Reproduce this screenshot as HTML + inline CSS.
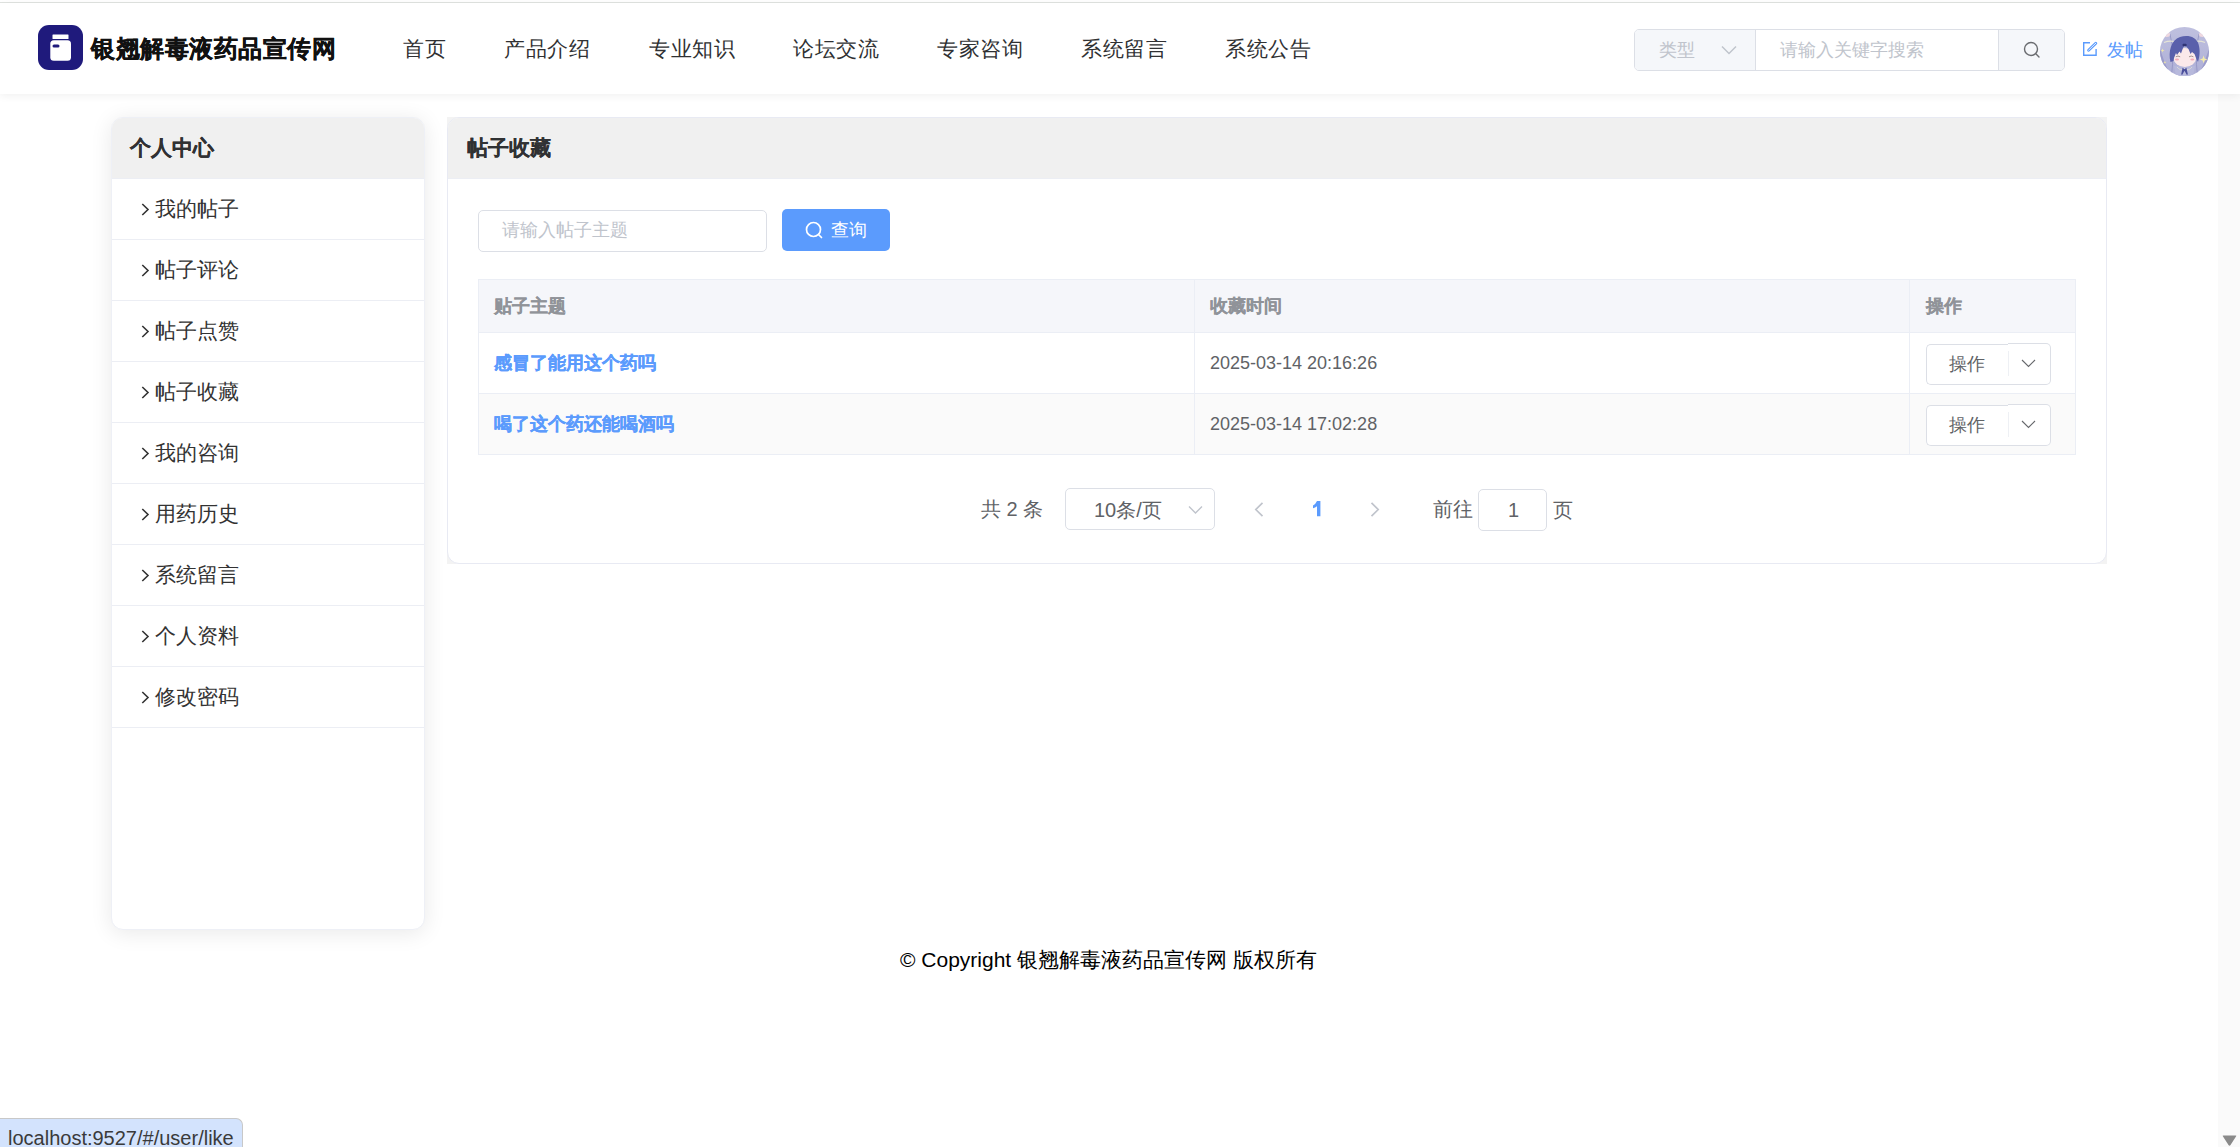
<!DOCTYPE html>
<html><head><meta charset="utf-8">
<style>
*{box-sizing:border-box;margin:0;padding:0}
html,body{width:2240px;height:1147px;overflow:hidden;background:#fff;font-family:"Liberation Sans",sans-serif;color:#333}
.abs{position:absolute}
#topline{left:0;top:2px;width:2240px;height:1px;background:#e0e3e0}
#header{left:0;top:3px;width:2240px;height:91px;background:#fff;box-shadow:0 2px 8px rgba(0,0,0,0.06)}
#logo{left:38px;top:25px;width:45px;height:45px;border-radius:11px;background:#1f1a7c}
#title{left:91px;top:34px;font-size:24px;letter-spacing:0.55px;-webkit-text-stroke:0.3px #111;font-weight:bold;color:#111;white-space:nowrap;line-height:30px}
.nav{top:36px;font-size:21px;letter-spacing:0.6px;color:#303133;line-height:26px;white-space:nowrap}
#sbox{left:1634px;top:29px;width:431px;height:42px;border:1px solid #dcdfe6;border-radius:5px;background:#fff;overflow:hidden}
#ssel{left:0;top:0;width:121px;height:40px;background:#f5f7fa;border-right:1px solid #dcdfe6}
#sbtn{right:0;top:0;width:66px;height:40px;background:#f5f7fa;border-left:1px solid #dcdfe6}
.ph{color:#c0c4cc;font-size:18px;line-height:22px;white-space:nowrap}
#side{left:111px;top:117px;width:314px;height:813px;border-radius:12px;background:#fff;box-shadow:0 3px 22px rgba(0,0,0,0.09);overflow:hidden;border:1px solid #eef0f6}
#sidehead{left:0;top:0;width:100%;height:61px;background:#f0f0f0;border-bottom:1px solid #eceef4}
.sitem{left:0;width:100%;height:61px;border-bottom:1px solid #eceef4}
.sitem span{position:absolute;left:43px;top:18px;font-size:21px;line-height:24px;color:#333;white-space:nowrap}
.sitem i{position:absolute;left:29px;top:23px}
#main{left:447px;top:117px;width:1660px;height:447px;border:1px solid #e8eaf3;border-radius:12px;background:#fff;overflow:hidden}
#mainhead{left:0;top:0;width:100%;height:61px;background:#f0f0f0;border-bottom:1px solid #eceef4}
.bold20{font-size:21px;font-weight:bold;color:#303133;-webkit-text-stroke:0.15px #303133;line-height:24px;white-space:nowrap}
#footer{left:900px;top:947px;font-size:21px;color:#000;line-height:26px;white-space:nowrap}
#status{left:0;top:1118px;width:243px;height:29px;background:#d3e3fd;border-top:1px solid #c8c8c8;border-right:1px solid #c8c8c8;border-top-right-radius:7px}
.th{font-size:18px;font-weight:bold;color:#909399;-webkit-text-stroke:0.2px #909399;line-height:22px;white-space:nowrap}
.tlink{font-size:18px;font-weight:bold;color:#5b9bfd;-webkit-text-stroke:0.25px #5b9bfd;line-height:22px;white-space:nowrap}
.tdate{font-size:18px;color:#606266;line-height:22px;white-space:nowrap}
.opl{width:83px;height:41px;border:1px solid #dcdfe6;border-right:none;border-radius:5px 0 0 5px;background:#fff}
.opr{width:43px;height:42px;border:1px solid #dcdfe6;border-left:none;border-radius:0 5px 5px 0;background:#fff}
.opt{font-size:18px;color:#606266;line-height:22px;white-space:nowrap}
.pg{font-size:20px;color:#606266;line-height:22px;white-space:nowrap}
</style></head><body>
<div class="abs" style="left:2218px;top:94px;width:22px;height:1053px;background:#fafafa"></div>
<svg class="abs" style="left:2220px;top:1134px" width="19" height="13" viewBox="0 0 19 13"><path d="M3 2.5 Q2 1.5 3.5 1.5 L15.5 1.5 Q17 1.5 16 2.5 L10.5 11 Q9.5 12.5 8.5 11 Z" fill="#8a8a8a"/></svg>
<div id="topline" class="abs"></div>
<div id="header" class="abs"></div>
<div id="logo" class="abs">
  <svg width="45" height="45" viewBox="0 0 45 45" style="position:absolute;left:0;top:0">
    <rect x="14.5" y="9.5" width="16" height="4.5" rx="0.5" fill="#fff"/>
    <rect x="12.3" y="15.3" width="20.7" height="20.5" rx="3.5" fill="#fff"/>
    <rect x="14.5" y="19.5" width="7" height="3" rx="1.5" fill="#1f1a7c"/>
  </svg>
</div>
<div id="title" class="abs">银翘解毒液药品宣传网</div>
<div class="abs nav" style="left:403px">首页</div>
<div class="abs nav" style="left:504px">产品介绍</div>
<div class="abs nav" style="left:649px">专业知识</div>
<div class="abs nav" style="left:793px">论坛交流</div>
<div class="abs nav" style="left:937px">专家咨询</div>
<div class="abs nav" style="left:1081px">系统留言</div>
<div class="abs nav" style="left:1225px">系统公告</div>

<div id="sbox" class="abs">
  <div id="ssel" class="abs">
    <div class="abs ph" style="left:24px;top:9px">类型</div>
    <svg class="abs" style="left:86px;top:15px" width="16" height="10" viewBox="0 0 16 10"><path d="M1 1.5 L8 8.5 L15 1.5" fill="none" stroke="#c0c4cc" stroke-width="1.5"/></svg>
  </div>
  <div class="abs ph" style="left:145px;top:9px">请输入关键字搜索</div>
  <div id="sbtn" class="abs">
    <svg class="abs" style="left:24px;top:11px" width="18" height="18" viewBox="0 0 18 18"><circle cx="8" cy="8" r="6.5" fill="none" stroke="#6a6c70" stroke-width="1.4"/><path d="M12.8 12.8 L16 16" stroke="#6a6c70" stroke-width="1.4" stroke-linecap="round"/></svg>
  </div>
</div>
<svg class="abs" style="left:2082px;top:41px" width="17" height="17" viewBox="0 0 17 17"><path d="M8 1.7 H1.7 V14.3 H14.1 V8" fill="none" stroke="#5b9bfd" stroke-width="1.4"/><path d="M6.6 9.2 L13.8 2.2" stroke="#5b9bfd" stroke-width="2.9" stroke-linecap="round"/><path d="M6.6 9.2 L13.8 2.2" stroke="#e3eeff" stroke-width="1" stroke-linecap="round"/></svg>
<div class="abs" style="left:2107px;top:39px;font-size:18px;line-height:22px;color:#5b9bfd">发帖</div>
<svg id="avatar" class="abs" style="left:2160px;top:27px" width="49" height="49" viewBox="0 0 49 49">
<defs><clipPath id="cc"><circle cx="24.5" cy="24.5" r="24.5"/></clipPath>
<linearGradient id="ag" x1="0" y1="0" x2="0" y2="1"><stop offset="0" stop-color="#bfc0df"/><stop offset="1" stop-color="#aeafd6"/></linearGradient></defs>
<g clip-path="url(#cc)">
<rect width="49" height="49" fill="url(#ag)"/>
<path d="M0 22 Q4 36 11 49 L0 49 Z" fill="#9a9bca"/>
<path d="M49 22 Q45 36 38 49 L49 49 Z" fill="#9a9bca"/>
<path d="M10 7 Q14.5 25 11.5 49" fill="none" stroke="#9093c3" stroke-width="0.8"/>
<path d="M39 7 Q34.5 25 37.5 49" fill="none" stroke="#9093c3" stroke-width="0.8"/>
<ellipse cx="6.5" cy="7.5" rx="3.5" ry="2.5" fill="#efd8df"/>
<ellipse cx="42.5" cy="7.5" rx="3.5" ry="2.5" fill="#efd8df"/>
<path d="M4 15.5 Q9 13.5 14.5 14.5" fill="none" stroke="#e6e5d6" stroke-width="1.2"/>
<path d="M45 15.5 Q40 13.5 34.5 14.5" fill="none" stroke="#e6e5d6" stroke-width="1.2"/>
<path d="M14 39 L16 49 L33 49 L35 39 Z" fill="#b7b9dc"/>
<ellipse cx="24.8" cy="30.5" rx="11.3" ry="9.5" fill="#fbe9ea"/>
<path d="M10.5 35 C8 25 11 13 20 10 C27 7.5 36 9 38.5 17 C40.5 24 39.5 30 38 35 L36 31 L34.5 27 L32 25 L30.5 27 L28.5 22 L26.2 19.5 L24.3 19 L23 21 L21 26.5 L19.5 24.5 L17 28 L16 26 L14 31 L13.5 34 Z" fill="#5a60ab"/>
<rect x="22.6" y="16.8" width="4" height="2.4" rx="0.8" fill="#2f3474"/>
<ellipse cx="17" cy="32.5" rx="2" ry="1" fill="#f5a9b6"/>
<ellipse cx="32.3" cy="32.5" rx="2" ry="1" fill="#f5a9b6"/>
<path d="M15.8 29.8 Q18 28.3 20.2 29.8" fill="none" stroke="#6b5d58" stroke-width="0.6"/>
<path d="M29 29.8 Q31.2 28.3 33.4 29.8" fill="none" stroke="#6b5d58" stroke-width="0.6"/>
<path d="M17 40 Q20.5 44.5 24.5 41.5 Q28.5 44.5 32 40" fill="none" stroke="#e5e4d5" stroke-width="0.7"/>
<path d="M22.6 40.8 L24.5 42.2 L26.4 40.8 L27.9 47.5 L26.7 47.8 L24.5 43.8 L22.3 47.8 L21.1 47.5 Z" fill="#4b4f9c"/>
<path d="M43.6 28.5 L44.6 31.4 L47.4 32.4 L44.6 33.4 L43.6 36.3 L42.6 33.4 L39.8 32.4 L42.6 31.4 Z" fill="#f4eba8"/>
<path d="M2.6 21.5 L3.2 23 L4.6 23.5 L3.2 24 L2.6 25.5 L2 24 L0.6 23.5 L2 23 Z" fill="#efe6a8"/>
<path d="M4.9 33.8 L5.4 35 L6.5 35.3 L5.4 35.7 L4.9 36.9 L4.4 35.7 L3.3 35.3 L4.4 35 Z" fill="#efe6a8"/>
</g></svg>

<div id="side" class="abs">
  <div id="sidehead" class="abs"><div class="abs bold20" style="left:18px;top:18px">个人中心</div></div>
  <div class="abs sitem" style="top:61px"><i><svg width="9" height="13" viewBox="0 0 9 13"><path d="M1.3 1 L7 6.5 L1.3 12" fill="none" stroke="#333" stroke-width="1.6"/></svg></i><span>我的帖子</span></div>
  <div class="abs sitem" style="top:122px"><i><svg width="9" height="13" viewBox="0 0 9 13"><path d="M1.3 1 L7 6.5 L1.3 12" fill="none" stroke="#333" stroke-width="1.6"/></svg></i><span>帖子评论</span></div>
  <div class="abs sitem" style="top:183px"><i><svg width="9" height="13" viewBox="0 0 9 13"><path d="M1.3 1 L7 6.5 L1.3 12" fill="none" stroke="#333" stroke-width="1.6"/></svg></i><span>帖子点赞</span></div>
  <div class="abs sitem" style="top:244px"><i><svg width="9" height="13" viewBox="0 0 9 13"><path d="M1.3 1 L7 6.5 L1.3 12" fill="none" stroke="#333" stroke-width="1.6"/></svg></i><span>帖子收藏</span></div>
  <div class="abs sitem" style="top:305px"><i><svg width="9" height="13" viewBox="0 0 9 13"><path d="M1.3 1 L7 6.5 L1.3 12" fill="none" stroke="#333" stroke-width="1.6"/></svg></i><span>我的咨询</span></div>
  <div class="abs sitem" style="top:366px"><i><svg width="9" height="13" viewBox="0 0 9 13"><path d="M1.3 1 L7 6.5 L1.3 12" fill="none" stroke="#333" stroke-width="1.6"/></svg></i><span>用药历史</span></div>
  <div class="abs sitem" style="top:427px"><i><svg width="9" height="13" viewBox="0 0 9 13"><path d="M1.3 1 L7 6.5 L1.3 12" fill="none" stroke="#333" stroke-width="1.6"/></svg></i><span>系统留言</span></div>
  <div class="abs sitem" style="top:488px"><i><svg width="9" height="13" viewBox="0 0 9 13"><path d="M1.3 1 L7 6.5 L1.3 12" fill="none" stroke="#333" stroke-width="1.6"/></svg></i><span>个人资料</span></div>
  <div class="abs sitem" style="top:549px"><i><svg width="9" height="13" viewBox="0 0 9 13"><path d="M1.3 1 L7 6.5 L1.3 12" fill="none" stroke="#333" stroke-width="1.6"/></svg></i><span>修改密码</span></div>
</div>

<div class="abs" style="left:447px;top:117px;width:1660px;height:447px;background:#f3f3f3"></div>
<div id="main" class="abs">
  <div id="mainhead" class="abs"><div class="abs bold20" style="left:19px;top:18px">帖子收藏</div></div>
</div>


<!-- main content -->
<div class="abs" style="left:478px;top:210px;width:289px;height:42px;border:1px solid #dcdfe6;border-radius:5px;background:#fff"></div>
<div class="abs ph" style="left:502px;top:219px">请输入帖子主题</div>
<div class="abs" style="left:782px;top:209px;width:108px;height:42px;border-radius:5px;background:#5b9bfd"></div>
<svg class="abs" style="left:804px;top:220px" width="20" height="20" viewBox="0 0 20 20"><circle cx="9.5" cy="9.5" r="7" fill="none" stroke="#fff" stroke-width="1.7"/><path d="M14.5 14.5 L17.5 17.5" stroke="#fff" stroke-width="1.7" stroke-linecap="round"/></svg>
<div class="abs" style="left:831px;top:219px;font-size:18px;line-height:22px;color:#fff;white-space:nowrap">查询</div>

<div class="abs" style="left:478px;top:279px;width:1598px;height:176px;border:1px solid #ebeef5;background:#fff"></div>
<div class="abs" style="left:479px;top:280px;width:1596px;height:53px;background:#f5f6fa;border-bottom:1px solid #ebeef5"></div>
<div class="abs" style="left:479px;top:393px;width:1596px;height:61px;background:#fafafa;border-top:1px solid #ebeef5"></div>
<div class="abs" style="left:1194px;top:280px;width:1px;height:174px;background:#ebeef5"></div>
<div class="abs" style="left:1909px;top:280px;width:1px;height:174px;background:#ebeef5"></div>
<div class="abs th" style="left:494px;top:295px">贴子主题</div>
<div class="abs th" style="left:1210px;top:295px">收藏时间</div>
<div class="abs th" style="left:1926px;top:295px">操作</div>
<div class="abs tlink" style="left:494px;top:352px">感冒了能用这个药吗</div>
<div class="abs tlink" style="left:494px;top:413px">喝了这个药还能喝酒吗</div>
<div class="abs tdate" style="left:1210px;top:352px">2025-03-14 20:16:26</div>
<div class="abs tdate" style="left:1210px;top:413px">2025-03-14 17:02:28</div>
<div class="abs opl" style="left:1926px;top:344px"></div>
<div class="abs opr" style="left:2008px;top:343px"></div>
<div class="abs" style="left:2008px;top:351px;width:1px;height:25px;background:#eef0f4"></div>
<div class="abs opt" style="left:1949px;top:353px">操作</div>
<svg class="abs" style="left:2021px;top:359px" width="15" height="9" viewBox="0 0 15 9"><path d="M1 1 L7.5 7.5 L14 1" fill="none" stroke="#66686c" stroke-width="1.1"/></svg>
<div class="abs opl" style="left:1926px;top:405px"></div>
<div class="abs opr" style="left:2008px;top:404px"></div>
<div class="abs" style="left:2008px;top:412px;width:1px;height:25px;background:#eef0f4"></div>
<div class="abs opt" style="left:1949px;top:414px">操作</div>
<svg class="abs" style="left:2021px;top:420px" width="15" height="9" viewBox="0 0 15 9"><path d="M1 1 L7.5 7.5 L14 1" fill="none" stroke="#66686c" stroke-width="1.1"/></svg>

<!-- pagination -->
<div class="abs pg" style="left:981px;top:498px">共 2 条</div>
<div class="abs" style="left:1065px;top:488px;width:150px;height:42px;border:1px solid #dcdfe6;border-radius:5px"></div>
<div class="abs pg" style="left:1094px;top:499px">10条/页</div>
<svg class="abs" style="left:1188px;top:505px" width="15" height="10" viewBox="0 0 15 10"><path d="M1 1.5 L7.5 8 L14 1.5" fill="none" stroke="#c0c4cc" stroke-width="1.4"/></svg>
<svg class="abs" style="left:1252px;top:501px" width="13" height="17" viewBox="0 0 13 17"><path d="M10.5 1.8 L3.8 8.5 L10.5 15.2" fill="none" stroke="#c0c4cc" stroke-width="1.7"/></svg>
<svg class="abs" style="left:1311px;top:499px" width="12" height="20" viewBox="0 0 12 20"><path d="M6 2 L9.4 2 L9.4 17.2 L6 17.2 L6 7.2 Q4.2 8.6 2 9.2 L2 6.4 Q4.6 5.2 6 2 Z" fill="#5b9bfd"/></svg>
<svg class="abs" style="left:1369px;top:501px" width="13" height="17" viewBox="0 0 13 17"><path d="M2.5 1.8 L9.2 8.5 L2.5 15.2" fill="none" stroke="#c0c4cc" stroke-width="1.7"/></svg>
<div class="abs pg" style="left:1433px;top:498px">前往</div>
<div class="abs" style="left:1478px;top:489px;width:69px;height:42px;border:1px solid #dcdfe6;border-radius:5px"></div>
<div class="abs pg" style="left:1508px;top:499px">1</div>
<div class="abs pg" style="left:1553px;top:499px">页</div>

<div id="footer" class="abs">© Copyright 银翘解毒液药品宣传网 版权所有</div>
<div id="status" class="abs"><div class="abs" style="left:8px;top:8px;font-size:20px;line-height:22px;color:#3a3a3a;white-space:nowrap">localhost:9527/#/user/like</div></div>
</body></html>
